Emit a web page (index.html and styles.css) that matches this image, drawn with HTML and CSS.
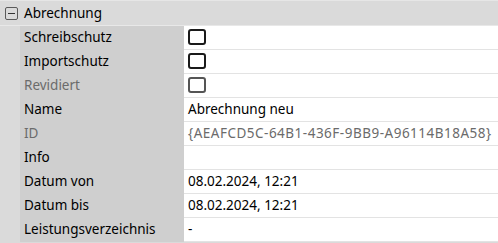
FILE: index.html
```html
<!DOCTYPE html>
<html>
<head>
<meta charset="utf-8">
<link rel="stylesheet" href="styles.css">
</head>
<body>
<div class="grid">
  <div class="header">
    <span class="toggle"><span class="dash"></span></span>
    <span class="title">Abrechnung</span>
  </div>
  <div class="rows">
    <div class="label">Schreibschutz</div><div class="value"><span class="cb"></span></div>
    <div class="label">Importschutz</div><div class="value"><span class="cb"></span></div>
    <div class="label dim">Revidiert</div><div class="value"><span class="cb cb-dim"></span></div>
    <div class="label">Name</div><div class="value">Abrechnung neu</div>
    <div class="label dim">ID</div><div class="value dim id">{AEAFCD5C-64B1-436F-9BB9-A96114B18A58}</div>
    <div class="label">Info</div><div class="value"></div>
    <div class="label">Datum von</div><div class="value">08.02.2024, 12:21</div>
    <div class="label">Datum bis</div><div class="value">08.02.2024, 12:21</div>
    <div class="label">Leistungsverzeichnis</div><div class="value">-</div>
  </div>
</div>
</body>
</html>
```
FILE: styles.css
```css
html, body {
  margin: 0;
  padding: 0;
  background: #dadada;
}
body {
  font-family: "Noto Sans", "Open Sans", sans-serif;
  font-size: 13.5px;
  color: #000;
  width: 498px;
  height: 243px;
  overflow: hidden;
}
.grid {
  border-top: 1px solid #e6e6e6;
}
.header {
  height: 24px;
  display: flex;
  align-items: center;
  border-bottom: 1px solid #e8e8e8;
  background: #dadada;
}
.toggle {
  box-sizing: border-box;
  width: 13px;
  height: 13px;
  margin-left: 5px;
  margin-right: 6px;
  border: 1px solid #5a5a5a;
  border-radius: 2px;
  display: flex;
  align-items: center;
  justify-content: center;
}
.dash {
  width: 7px;
  height: 1px;
  background: #333;
}
.title {
  line-height: 24px;
}
.rows {
  display: grid;
  grid-template-columns: 164px 1fr;
  margin-left: 20px;
}
.label {
  height: 24px;
  box-sizing: border-box;
  background: #cfcfcf;
  padding-left: 4px;
  line-height: 23px;
  white-space: nowrap;
}
.value {
  height: 24px;
  box-sizing: border-box;
  background: #fff;
  border-bottom: 1px solid #e3e3e3;
  padding-left: 4px;
  line-height: 23px;
  display: flex;
  align-items: center;
  white-space: nowrap;
}
.dim {
  color: #6b6b6b;
}
.id {
  letter-spacing: 0.5px;
}
.cb {
  box-sizing: border-box;
  width: 18px;
  height: 16px;
  border: 2px solid #1a1a1a;
  border-radius: 3px;
  margin-top: -1px;
}
.cb-dim {
  border-color: #555;
}
```
